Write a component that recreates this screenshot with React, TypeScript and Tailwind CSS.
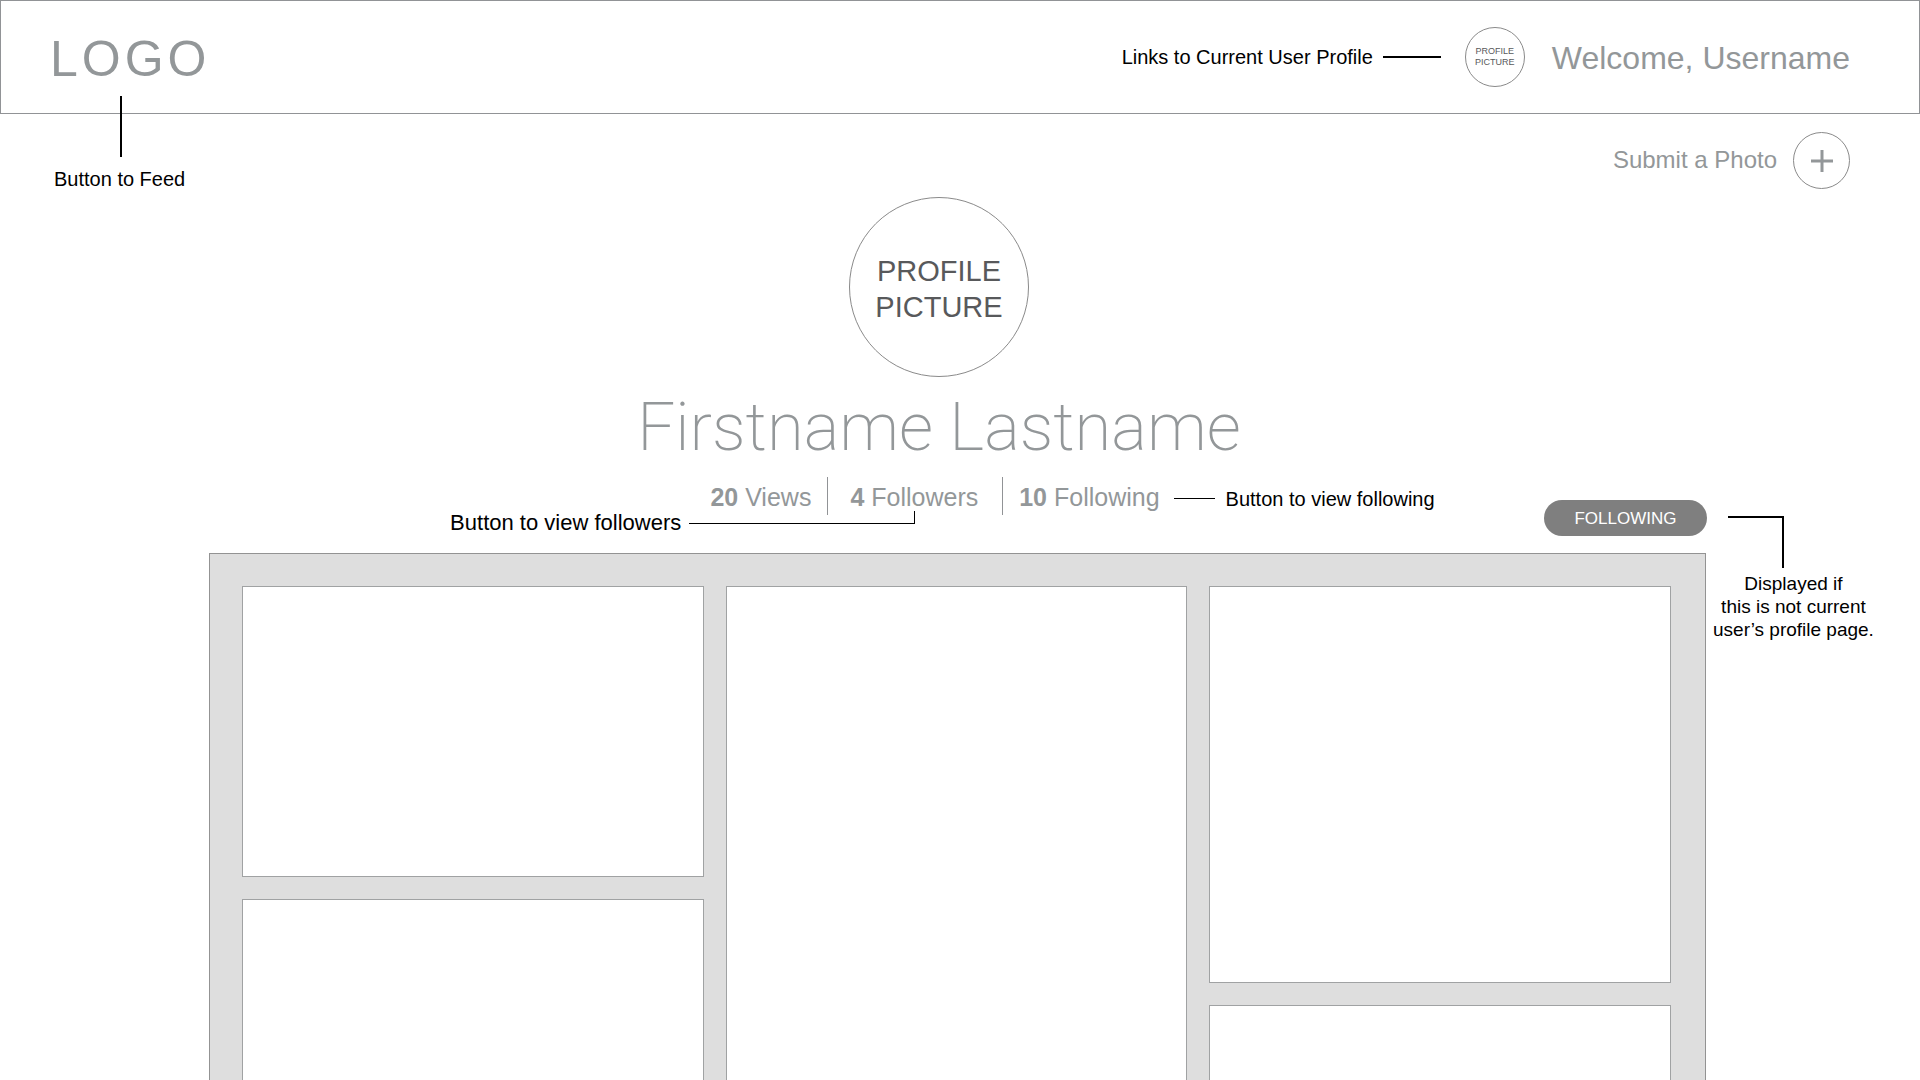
import React from "react";

const columns: string[][] = [
  ["h-[291px]", "h-[420px]"],
  ["h-[640px]"],
  ["h-[397px]", "h-[420px]"],
];

function Header() {
  return (
    <header className="flex h-[114px] items-center justify-between border border-[#919396] pl-[49px] pr-[69px]">
      <div className="relative">
        <a href="#feed" className="block pt-1 text-[50px] leading-[60px] tracking-[4px] text-[#939799]">
          LOGO
        </a>
        <div className="absolute left-1 top-[71px] flex flex-col items-start">
          <span className="ml-[66px] h-[61px] w-0.5 bg-black" />
          <span className="mt-[10px] whitespace-nowrap text-[20px] leading-6 text-black">Button to Feed</span>
        </div>
      </div>
      <div className="flex items-center">
        <span className="whitespace-nowrap text-[20px] leading-6 text-black">Links to Current User Profile</span>
        <span className="ml-[10px] h-0.5 w-[58px] bg-black" />
        <a href="#me" className="ml-6 flex items-center">
          <span className="flex size-[60px] items-center justify-center rounded-full border border-[#8a8a8a] text-center text-[9px] leading-[11px] text-[#58595b]">
            PROFILE
            <br />
            PICTURE
          </span>
          <span className="ml-[27px] whitespace-nowrap pt-0.5 text-[32px] leading-10 text-[#939799]">Welcome, Username</span>
        </a>
      </div>
    </header>
  );
}

function SubmitPhoto() {
  return (
    <div className="flex justify-end pr-[70px] pt-[18px]">
      <button type="button" className="flex items-center gap-4 text-[24px] leading-8 text-[#939799]">
        <span className="pb-0.5">Submit a Photo</span>
        <span className="flex size-[57px] items-center justify-center rounded-full border border-[#8a8a8a]">
          <svg viewBox="0 0 22 22" className="size-[22px]" stroke="#939799" strokeWidth="3" aria-hidden="true">
            <path d="M11 0V22M0 11H22" />
          </svg>
        </span>
      </button>
    </div>
  );
}

function Profile() {
  return (
    <section className="flex flex-col items-center pr-[42px] pt-2 text-[#939799]">
      <div className="flex size-[180px] items-center justify-center rounded-full border border-[#8a8a8a] pt-1 text-center text-[29px] leading-9 text-[#58595b]">
        PROFILE
        <br />
        PICTURE
      </div>
      <h1 className="my-2 whitespace-nowrap py-0.5 font-[Roboto] text-[67px] font-extralight leading-[80px]">
        Firstname Lastname
      </h1>
      <ul className="flex h-[37px] items-center whitespace-nowrap pr-2 text-[25px] leading-8">
        <li className="pr-4 pt-0.5">
          <b>20</b> Views
        </li>
        <li className="relative border-x border-[#919396] pb-0.5 pl-[22px] pr-[24px] pt-1">
          <button type="button">
            <b>4</b> Followers
          </button>
          <div className="absolute right-[87px] top-[34px] flex items-start">
            <span className="mr-2 text-[22px] leading-6 text-black">Button to view followers</span>
            <span className="h-[13px] w-[226px] border-b border-r border-black" />
          </div>
        </li>
        <li className="relative pl-4 pt-0.5">
          <button type="button">
            <b>10</b> Following
          </button>
          <div className="absolute left-full top-2 ml-[14px] flex items-center">
            <span className="mr-[11px] h-px w-[41px] bg-black" />
            <span className="text-[20px] leading-6 text-black">Button to view following</span>
          </div>
        </li>
      </ul>
    </section>
  );
}

function FollowState() {
  return (
    <div className="-mt-[14px] mb-[17px] flex justify-end pr-[213px]">
      <div className="relative">
        <button type="button" className="flex h-9 w-[163px] items-center justify-center rounded-full bg-[#7f7f7f] pt-0.5 text-[17px] text-white">
          FOLLOWING
        </button>
        <div className="absolute left-[169px] top-4 flex flex-col">
          <span className="ml-[15px] h-[52px] w-14 border-r-2 border-t-2 border-black" />
          <p className="mt-1 whitespace-nowrap text-center text-[19px] leading-[23px] text-black">
            Displayed if
            <br />
            this is not current
            <br />
            user’s profile page.
          </p>
        </div>
      </div>
    </div>
  );
}

function PhotoGrid() {
  return (
    <main className="ml-[209px] mr-[214px] grid grid-cols-3 gap-[22px] border border-[#939393] bg-[#dedede] pb-8 pl-8 pr-[34px] pt-8">
      {columns.map((cards, i) => (
        <div key={i} className="flex flex-col gap-[22px]">
          {cards.map((height, j) => (
            <div key={j} className={`${height} border border-[#a0a2a3] bg-white`} />
          ))}
        </div>
      ))}
    </main>
  );
}

export default function App() {
  return (
    <div className="h-screen overflow-y-auto bg-white font-['Liberation_Sans',Arial,sans-serif] [scrollbar-width:none]">
      <Header />
      <SubmitPhoto />
      <Profile />
      <FollowState />
      <PhotoGrid />
    </div>
  );
}
